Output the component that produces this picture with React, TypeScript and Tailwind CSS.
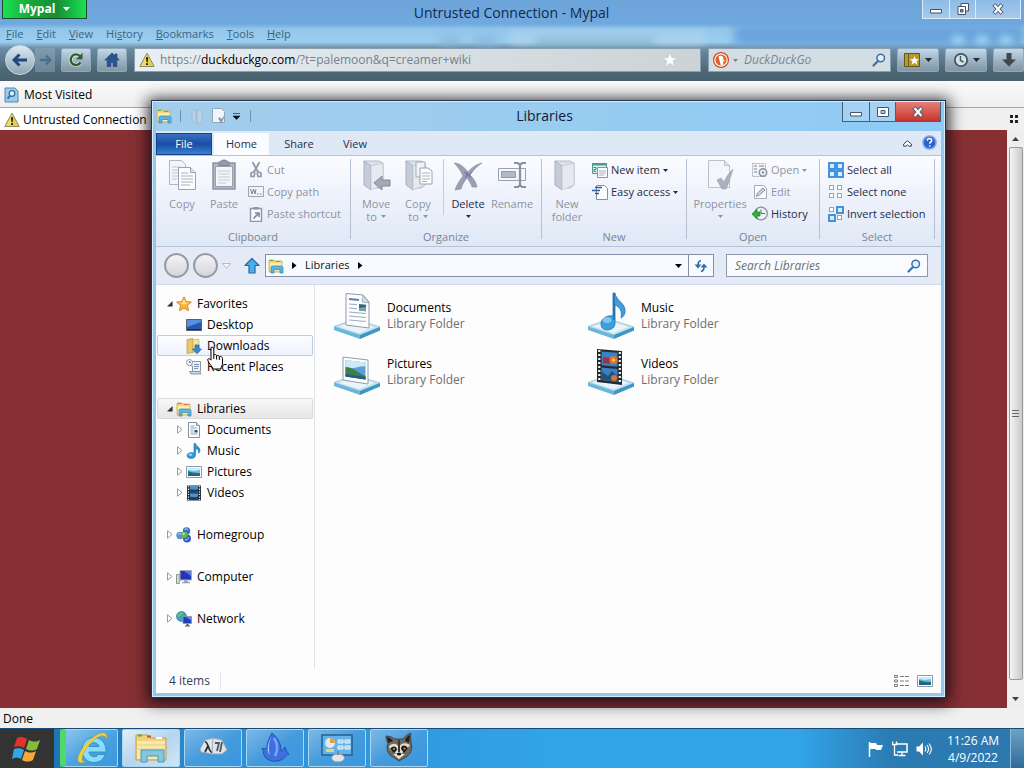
import React from 'react';

const GlassButton = ({ label, className = '', children }: { label: string; className?: string; children: React.ReactNode }) => (
  <button
    aria-label={label}
    className={`flex h-6 shrink-0 items-center justify-center gap-1 rounded-xs border border-[#8fa9bc] bg-gradient-to-b from-[#c3d9ea] via-[#9fb4c4] to-[#8296a5] ${className}`}
  >
    {children}
  </button>
);

const Caret = ({ className = 'text-[#1e2a3a]' }: { className?: string }) => (
  <svg width="7" height="4" viewBox="0 0 7 4" className={`shrink-0 ${className}`}>
    <path d="M0 0h7L3.500 4z" fill="currentColor" />
  </svg>
);

const SmallCaret = () => (
  <svg width="5" height="3" viewBox="0 0 5 3" className="shrink-0">
    <path d="M0 0h5L2.500 3z" fill="currentColor" />
  </svg>
);

const WarningIcon = () => (
  <svg width="16" height="16" viewBox="0 0 16 16" className="shrink-0">
    <path d="M8 1.200 15.200 14.500H.8z" fill="#e9cf42" stroke="#8f8a63" strokeLinejoin="round" />
    <path d="M8 3 9 5v9H2z" fill="#f5e878" opacity=".6" />
    <path d="M7 5.200h2.200l-.5 5H7.500zM7 11.200h2v1.900H7z" fill="#1c1c14" />
  </svg>
);

const LibrariesIcon = ({ size = 16 }: { size?: number }) => (
  <svg width={size} height={size} viewBox="0 0 16 16" className="shrink-0">
    <path d="M1 2h5l1 1h7v11H1z" fill="#f3d778" stroke="#d0a842" strokeWidth=".8" />
    <path d="M2 2.500h3" stroke="#4fae4c" />
    <path d="M8 3.500h4" stroke="#e87047" />
    <path d="M2 5h11.500v8H2z" fill="#fbeeb0" />
    <path d="M3 15V9.500C3 8.600 3.500 8 4.500 8h8c1 0 2.500.6 2.500 1.500V15h-3v-3.500H6V15z" fill="#5db4df" stroke="#2f86b8" strokeWidth=".7" />
  </svg>
);

const PageGlyph = ({ size = 16 }: { size?: number }) => (
  <svg width={size} height={size} viewBox="0 0 16 16" className="shrink-0">
    <path d="M2.500.5h8l3 3v12h-11z" fill="#fdfdfd" stroke="#8793a5" />
    <path d="M10.500.5v3h3" fill="#d6dfec" stroke="#8793a5" />
    <path d="M4.500 4h4M4.500 6h7M4.500 8h3M4.500 10h3M4.500 12h7" stroke="#8fa3bd" />
    <path d="M8.500 8h3v2.500h-3z" fill="#28496a" />
  </svg>
);

const NoteIcon = () => (
  <svg width="16" height="16" viewBox="0 0 16 16" className="shrink-0">
    <path d="M8 .5h1.500c.3 2.500 4.500 3.500 4.500 6.500 0 1.300-.6 2.500-1.400 3.300.3-2.300-.7-4-3.100-4.700V12c0 2-1.800 3.500-4.300 3.500S1 14.300 1 12.700C1 10.900 3 9.600 5.300 9.600c1 0 1.900.2 2.700.6z" fill="#2d95d8" stroke="#1b6fae" strokeWidth=".6" />
    <ellipse cx="4.500" cy="11.800" rx="2" ry="1.200" fill="#8fd0f5" />
  </svg>
);

const PictureIcon = () => (
  <svg width="16" height="16" viewBox="0 0 16 16" className="shrink-0">
    <path d="M.5 2.500h15v11H.5z" fill="#fff" stroke="#8b9aab" />
    <path d="M2 4h12v8H2z" fill="#6fc0e8" />
    <path d="M2 4h12v2l-6 1-6-1z" fill="#c8ecf9" />
    <path d="M2 7c3 1 7 2 12 2v3H2z" fill="#28746b" />
    <path d="M2 10.500c4-1 8 0 12 1v.5H2z" fill="#1b5ea0" />
  </svg>
);

const FilmIcon = () => (
  <svg width="16" height="16" viewBox="0 0 16 16" className="shrink-0">
    <path d="M1 .5h14v15H1z" fill="#1e2b31" />
    <path d="M4 1h8v6.500H4zM4 8.500h8V15H4z" fill="#4f93c9" />
    <path d="M4 5c2-2 5 1 8-1v3.500H4zM4 12c3-1 5 2 8-1v4H4z" fill="#1f4168" />
    <path d="M2.500 1v14M13.500 1v14" stroke="#e1ebe9" strokeWidth="1.300" strokeDasharray="1.300 1.300" />
  </svg>
);

const StarIcon = () => (
  <svg width="16" height="16" viewBox="0 0 16 16" className="shrink-0">
    <path d="m8 .8 2.200 4.700 5.200.6-3.900 3.500 1.100 5.200L8 12.200l-4.600 2.600 1.100-5.200L.6 6.100l5.200-.6z" fill="#f6b53c" stroke="#d6822b" strokeWidth=".9" />
    <path d="m8 3 1.400 3.400 3 .4L8 8.500 3.600 6.800l3-.4z" fill="#fde29a" />
  </svg>
);

const DesktopIcon = () => (
  <svg width="16" height="16" viewBox="0 0 16 16" className="shrink-0">
    <path d="M.5 2.500h15v11H.5z" fill="#2658b4" stroke="#55606e" />
    <path d="M1 3h14v2L1 10z" fill="#5b90df" />
    <path d="M1 12.500h14" stroke="#1a2c4f" />
  </svg>
);

const DownloadsIcon = () => (
  <svg width="16" height="16" viewBox="0 0 16 16" className="shrink-0">
    <path d="M1 1.500 7 .5v14l-6 1z" fill="#e9c869" stroke="#b99744" strokeWidth=".7" />
    <path d="M7 1.500h6V14H7z" fill="#f7e3a0" stroke="#cfb061" strokeWidth=".7" />
    <path d="M9 7h4v4h2.500L11 15.700 6.500 11H9z" fill="#348bd0" stroke="#1e65a4" strokeWidth=".7" />
  </svg>
);

const RecentIcon = () => (
  <svg width="16" height="16" viewBox="0 0 16 16" className="shrink-0">
    <path d="M5 2.500h9.500v10h-8V7H5z" fill="#edf0f5" stroke="#8d98a7" />
    <path d="M3.500 12.500h10l1.500 2.500h-10z" fill="#d1d8e3" stroke="#8a93a3" />
    <path d="M8 5.500h5M8 7.500h5M8 9.500h4" stroke="#7c93b4" />
    <circle cx="3.500" cy="3.500" r="3" fill="#fff" stroke="#8d98a7" />
    <path d="M3.500 2v1.500H5" stroke="#596a80" fill="none" />
  </svg>
);

const HomegroupIcon = () => (
  <svg width="16" height="16" viewBox="0 0 16 16" className="shrink-0">
    <circle cx="10.500" cy="4" r="3.700" fill="#3b6fc0" />
    <circle cx="4" cy="8.500" r="3.700" fill="#5a93cf" />
    <circle cx="11" cy="11.500" r="4" fill="#325fb4" />
    <circle cx="8.500" cy="8" r="3.200" fill="#58b848" />
    <path d="M8.500 2.500c1-1 3-.8 3.500.5M2 7.500c.8-1 2.500-1.200 3.200-.3M9 13c2-.2 3-1 4-2.500" stroke="#cfe5fa" fill="none" />
    <circle cx="7.700" cy="7" r="1.200" fill="#b9ec9c" />
  </svg>
);

const ComputerIcon = () => (
  <svg width="16" height="16" viewBox="0 0 16 16" className="shrink-0">
    <path d="M.5 5.500h2.800v9H.5z" fill="#dbe2d6" stroke="#8a9787" />
    <path d="M4 1.500h11.500v9.500H4z" fill="#2336b7" stroke="#a5abb5" />
    <path d="M8 2h7v5z" fill="#5c77e2" />
    <path d="M8 11.500h4v1.500h2v1.200H6V13h2z" fill="#98a4b3" />
  </svg>
);

const NetworkIcon = () => (
  <svg width="16" height="16" viewBox="0 0 16 16" className="shrink-0">
    <circle cx="5.500" cy="5.500" r="5" fill="#3f9fd2" stroke="#1c6b97" strokeWidth=".6" />
    <path d="M2 3c2-2 4-2 5-1.500S5 5 4 5 2.500 8 1.500 7zM6 6l3-1v4z" fill="#62c46a" />
    <path d="M7 5.500h8.500v7H7z" fill="#1e40b5" stroke="#8d98aa" strokeWidth=".8" />
    <path d="M10 6h5v3.500z" fill="#6185e6" />
    <path d="M10.500 13h2v1.500H14v1H9v-1h1.500z" fill="#4c5a6d" />
  </svg>
);

const Magnifier = ({ color = '#3b6fa5' }: { color?: string }) => (
  <svg width="14" height="14" viewBox="0 0 14 14" className="shrink-0">
    <circle cx="8.700" cy="5" r="3.800" fill="#e3f0fb" stroke={color} strokeWidth="1.500" />
    <path d="M6 8 1.500 12.500" stroke={color} strokeWidth="2.200" strokeLinecap="round" />
  </svg>
);

const WindowGlyph = ({ kind }: { kind: 'min' | 'restore' | 'max' | 'close' }) => (
  <svg width="14" height="12" viewBox="0 0 14 12">
    {kind === 'min' && <path d="M1.500 6.500h11v3.500h-11z" fill="#fff" stroke="#44536b" />}
    {kind === 'max' && <path d="M1.500 1.500h11v9h-11zM5 4.500h4v3H5z" fill="#fff" fillRule="evenodd" stroke="#44536b" />}
    {kind === 'restore' && (
      <>
        <path d="M5 .5h7.500v7.500H5z" fill="#fff" stroke="#44536b" />
        <path d="M2 3.500h7.500v8H2zM4.500 6.500h2.500v2.500H4.500z" fill="#fff" fillRule="evenodd" stroke="#44536b" />
      </>
    )}
    {kind === 'close' && (
      <>
        <path d="m3 1.500 8 9M11 1.500l-8 9" stroke="#44536b" strokeWidth="4" />
        <path d="m3.500 2 7 8M10.500 2l-7 8" stroke="#fff" strokeWidth="2.200" />
      </>
    )}
  </svg>
);

/* Browser */

const menus = ['File', 'Edit', 'View', 'History', 'Bookmarks', 'Tools', 'Help'];

const MenuItem = ({ name }: { name: string }) => {
  const key = name === 'History' ? 2 : 0;
  return (
    <button>
      {name.slice(0, key)}
      <span className="underline">{name[key]}</span>
      {name.slice(key + 1)}
    </button>
  );
};

const BrowserChrome = () => (
  <header className="relative h-[81px] shrink-0 overflow-hidden bg-[linear-gradient(#6da4da_0,#70a9df_24px,#94c6ea_29px,#9bcdf0_42px,#6d8da5_48px,#4d6877_70px,#4a6270_80px)]">
    {/* shapes showing through the glass */}
    <div className="absolute top-[30px] right-[318px] left-[510px] h-4 bg-[#b4d8ee]/50 blur-[3px]" />
    <div className="absolute top-[38px] left-[536px] h-2 w-[118px] bg-[#6c9bb8]/50 blur-xs" />
    <div className="absolute top-9 left-[440px] h-3 w-5 bg-[#7fb0d6]/60 blur-xs" />
    <div className="absolute top-9 left-[474px] h-3 w-6 bg-[#7fb0d6]/60 blur-xs" />
    <div className="absolute top-6 right-0 h-[22px] w-[290px] bg-[#6ca5dc] blur-xs" />
    <div className="absolute top-9 right-[60px] h-2 w-3 bg-[#9dd2f0] blur-[3px]" />
    <div className="absolute top-9 right-9 h-2 w-3 bg-[#9dd2f0] blur-[3px]" />
    <div className="absolute top-9 right-3 h-2 w-3 bg-[#9dd2f0] blur-[3px]" />

    <div className="relative flex h-[26px] items-start">
      <div className="flex-1 pl-[2px]">
        <button className="flex h-[19px] w-[85px] items-center justify-center gap-2 border border-t-0 border-[#1c4d28] bg-[linear-gradient(90deg,#1ce052,#17a53a_35%,#148f36_65%,#1ce052)] text-[12px] font-bold text-white">
          Mypal <Caret className="text-white" />
        </button>
      </div>
      <h1 className="text-[14px] leading-[26px] text-[#0c2a52]">Untrusted Connection - Mypal</h1>
      <div className="flex flex-1 justify-end pr-[3px]">
        <div className="flex h-[19px] border border-t-0 border-[#dcebf8] bg-gradient-to-b from-[#8ebbe6] to-[#a5caea]">
          <button aria-label="Minimize" className="flex w-[27px] items-center justify-center border-r border-[#dcebf8]"><WindowGlyph kind="min" /></button>
          <button aria-label="Restore" className="flex w-[26px] items-center justify-center border-r border-[#dcebf8]"><WindowGlyph kind="restore" /></button>
          <button aria-label="Close" className="flex w-11 items-center justify-center"><WindowGlyph kind="close" /></button>
        </div>
      </div>
    </div>

    <nav className="relative flex h-4 items-center gap-[13px] pl-[6px] text-[11px] text-[#3a6483]">
      {menus.map((name) => <MenuItem key={name} name={name} />)}
    </nav>

    <div className="relative flex h-9 items-center gap-[6px] pl-[5px]">
      <div className="flex items-center">
        <button aria-label="Back" className="z-10 flex h-[30px] w-[30px] items-center justify-center rounded-full border border-[#c8dbe8] bg-gradient-to-b from-[#dbe9f4] via-[#b5c6d4] to-[#93a5b3]">
          <svg width="16" height="14" viewBox="0 0 16 14">
            <path d="M7.500 1.500 2 7l5.500 5.500M2.500 7H15" fill="none" stroke="#1d4a7f" strokeWidth="3" />
          </svg>
        </button>
        <button aria-label="Forward" className="flex h-6 w-5 items-center justify-center bg-[#8fa9bb]/50">
          <svg width="13" height="12" viewBox="0 0 16 14">
            <path d="M8.500 1.500 14 7l-5.500 5.500M13.500 7H1" fill="none" stroke="#4d7089" strokeWidth="3" />
          </svg>
        </button>
      </div>
      <GlassButton label="Reload" className="w-[30px]">
        <svg width="16" height="16" viewBox="0 0 16 16">
          <path d="M12.500 10.500A5.300 5.300 0 1 1 11.800 4" fill="none" stroke="#dbe9d8" strokeWidth="4" />
          <path d="M12.500 10.500A5.300 5.300 0 1 1 11.800 4" fill="none" stroke="#2f5d35" strokeWidth="2.400" />
          <path d="M14.500.8v6.500H8z" fill="#2f5d35" />
        </svg>
      </GlassButton>
      <GlassButton label="Home" className="w-[30px]">
        <svg width="16" height="16" viewBox="0 0 16 16">
          <path d="M8 1 .8 8h2.400v6.500h3.600v-4h2.400v4h3.600V8h2.400L13 5.600V2h-2v1.800z" fill="#2b5592" stroke="#1d3f72" strokeWidth=".6" />
        </svg>
      </GlassButton>
      <label className="ml-px flex h-6 min-w-0 flex-1 items-center border border-[#8aa0b0] bg-gradient-to-r from-[#e8eff4] to-[#ccd3d7] px-1 text-[12px] text-[#74828d]">
        <WarningIcon />
        <span className="ml-[5px]">https://</span>
        <span className="text-black">duckduckgo.com</span>
        <input aria-label="Address" defaultValue="/?t=palemoon&q=creamer+wiki" className="min-w-0 flex-1 outline-none" />
        <svg width="16" height="16" viewBox="0 0 16 16" className="mr-[18px] shrink-0">
          <path d="m8 .8 2 5h5.200L11 9l1.600 5.600L8 11.300l-4.600 3.300L5 9 .8 5.800H6z" fill="#fff" stroke="#bcc8d1" strokeWidth=".6" />
        </svg>
      </label>
      <label className="ml-px flex h-6 w-[183px] items-center gap-1 border border-[#8aa0b0] bg-[#d3dde4] px-1">
        <svg width="16" height="16" viewBox="0 0 16 16" className="shrink-0">
          <circle cx="8" cy="8" r="8" fill="#d2451f" />
          <circle cx="8" cy="8" r="6.200" fill="#e0602f" stroke="#fff" strokeWidth="1.200" />
          <path d="M5.500 4.500C8 2.500 11 4.500 10.500 7.500l2 1.500-2.500.5.500 4H7.800z" fill="#fff" />
          <path d="M9.500 8h3l-2 1.700z" fill="#f6c431" />
        </svg>
        <span className="text-[#77838c]"><SmallCaret /></span>
        <input aria-label="Search the web" placeholder="DuckDuckGo" className="min-w-0 flex-1 pl-[2px] text-[12px] italic outline-none placeholder:text-[#7c8790]" />
        <Magnifier />
      </label>
      <GlassButton label="Bookmarks" className="w-[42px]">
        <svg width="17" height="16" viewBox="0 0 17 16">
          <path d="M.5 1.500h15v13H.5z" fill="#b59b2c" stroke="#64571b" />
          <path d="M4.500 2v12" stroke="#6a5c1e" />
          <path d="m10.500 4 1.300 3.200h3.400l-2.700 2.100 1 3.400-3-2-3 2 1-3.400-2.700-2.100h3.400z" fill="#fff" />
        </svg>
        <Caret />
      </GlassButton>
      <GlassButton label="History" className="w-[42px]">
        <svg width="16" height="16" viewBox="0 0 16 16">
          <circle cx="8" cy="8" r="6.200" fill="#d5e2e3" stroke="#405a60" strokeWidth="1.800" />
          <path d="M7.500 4v4.500L10.500 10" fill="none" stroke="#405a60" strokeWidth="1.400" />
        </svg>
        <Caret />
      </GlassButton>
      <GlassButton label="Downloads" className="w-[31px]">
        <svg width="14" height="14" viewBox="0 0 14 14">
          <path d="M4.500 0h5v6.500H14L7 13.500 0 6.500h4.500z" fill="#41474c" />
        </svg>
      </GlassButton>
    </div>
  </header>
);

const ScrollBar = () => (
  <div className="flex w-[17px] flex-col items-center bg-[#eeeeee]">
    <button aria-label="Scroll up" className="flex h-[17px] items-center justify-center"><Caret className="rotate-180 text-[#444]" /></button>
    <div className="flex w-[14px] flex-1 items-center justify-center rounded-xs border border-[#9a9a9a] bg-gradient-to-r from-[#f5f5f5] to-[#c9c9cb]">
      <svg width="7" height="7" viewBox="0 0 7 7"><path d="M0 .5h7M0 3.500h7M0 6.500h7" stroke="#666" /></svg>
    </div>
    <button aria-label="Scroll down" className="flex h-7 items-end justify-center pb-[7px]"><Caret className="text-[#444]" /></button>
  </div>
);

/* Explorer window */

type ToolProps = { label: string; icon: React.ReactNode; caret?: boolean; on?: boolean; className?: string };

const BigTool = ({ label, icon, caret = false, on = false, className = '' }: ToolProps) => {
  const [first, second] = label.split(' ');
  return (
    <button className={`flex flex-col items-center text-[11px] leading-[13px] ${on ? 'text-[#1e2c4a]' : 'text-[#8d94a2]'} ${className}`}>
      <span className="mb-[6px] flex h-8 items-center">{icon}</span>
      <span>{first}</span>
      <span className="flex min-h-3 items-center gap-1">
        {second}
        {caret && <SmallCaret />}
      </span>
    </button>
  );
};

const SmallTool = ({ label, icon, caret = false, on = false }: ToolProps) => (
  <button className={`flex h-[22px] items-center gap-[3px] text-[11px] whitespace-nowrap ${on ? 'text-[#1e2c4a]' : 'text-[#8d94a2]'}`}>
    {icon}
    <span>{label}</span>
    {caret && <SmallCaret />}
  </button>
);

const RibbonGroup = ({ name, className, children }: { name: string; className: string; children: React.ReactNode }) => (
  <section className={`flex h-20 flex-col border-r border-[#b6c1d2] ${className}`}>
    <div className="flex h-[70px] shrink-0 items-start">{children}</div>
    <div className="shrink-0 text-center text-[11px] leading-4 text-[#7c8492]">{name}</div>
  </section>
);

const FolderGlyph = ({ overlay }: { overlay?: 'arrow' | 'pages' }) => (
  <svg width="30" height="32" viewBox="0 0 30 32">
    <path d="M3 2h15l4 2v22l-4 3H8z" fill="#dbe0ea" stroke="#b4bac8" />
    <path d="M3 2 10 7v24l-7-5z" fill="#c5cbd9" stroke="#a9b0c0" />
    <path d="M10 7 22 4v22l-12 5z" fill="#e6e9f0" stroke="#bfc5d1" strokeWidth=".7" />
    {overlay === 'arrow' && <path d="m13 24 8-7v4h8v6h-8v4z" fill="#a3abb9" stroke="#7f8898" />}
    {overlay === 'pages' && (
      <>
        <path d="M13 3h9v15h-9z" fill="#f1f3f7" stroke="#a3abb9" />
        <path d="M17 9h8l4 3v13H17z" fill="#fff" stroke="#98a1b1" />
        <path d="M19 14h8M19 17h8M19 20h8M19 22.500h5" stroke="#a5aebc" />
      </>
    )}
  </svg>
);

const CopyGlyph = () => (
  <svg width="30" height="32" viewBox="0 0 30 32">
    <path d="M2.500 1.500h12l4 4v20h-16z" fill="#f3f5f9" stroke="#b0b7c4" />
    <path d="M5 8h8M5 11h8M5 14h6M5 17h6M5 20h5" stroke="#bec5d1" />
    <path d="M11.500 8.500h12l5 5v17h-17z" fill="#fbfcfd" stroke="#99a2b1" />
    <path d="M23.500 8.500v5h5" fill="#dfe4ec" stroke="#99a2b1" />
    <path d="M14 14h7M14 17h12M14 20h12M14 23h12M14 26h9" stroke="#a9b1be" />
  </svg>
);

const PasteGlyph = () => (
  <svg width="26" height="32" viewBox="0 0 26 32">
    <path d="M2 4h22v26H2z" fill="#b0b7c6" stroke="#8b94a5" strokeWidth="1.500" />
    <path d="M4.500 7.500h17v20h-17z" fill="#f3f5f9" stroke="#98a1b2" />
    <path d="M7 12h12M7 15h12M7 18h12M7 21h12M7 24h8" stroke="#c4cad5" />
    <path d="M8 3c2 0 2-2 5-2s3 2 5 2v3.500H8z" fill="#929bab" stroke="#7a8496" />
  </svg>
);

const SquaresGlyph = ({ kind }: { kind: 'all' | 'none' | 'invert' }) => {
  const cells = [[0, 0], [8, 0], [0, 8], [8, 8]];
  return (
    <svg width="16" height="16" viewBox="0 0 16 16" className="shrink-0">
      {cells.map(([x, y]) => {
        const picked = kind === 'all' || (kind === 'invert' && x + y === 8);
        return picked ? (
          <rect key={`${x}${y}`} x={x + 1} y={y + 1} width="6" height="6" fill="#d6ebfc" stroke="#318ad8" strokeWidth="1.800" />
        ) : (
          <rect key={`${x}${y}`} x={x + 1.5} y={y + 1.5} width="4" height="4" fill="#fff" stroke="#98a2b3" />
        );
      })}
    </svg>
  );
};

const Ribbon = () => (
  <div className="flex h-[92px] shrink-0 items-start border-y border-[#b4c4d8] bg-gradient-to-b from-[#fbfcff] via-[#edf1fb] to-[#dfe8f6] pt-[3px]">
    <RibbonGroup name="Clipboard" className="w-[195px]">
      <BigTool label="Copy" icon={<CopyGlyph />} className="ml-1 w-11" />
      <BigTool label="Paste" icon={<PasteGlyph />} className="w-10" />
      <div className="ml-1">
        <SmallTool label="Cut" icon={
          <svg width="16" height="16" viewBox="0 0 16 16">
            <path d="M4.500 0 10 10M11.500 0 6 10" stroke="#8e97a8" strokeWidth="1.800" />
            <path d="M6.500 9.500 3 11v3.500h3l1-4M9.500 9.500 13 11v3.500h-3l-1-4" fill="none" stroke="#8e97a8" strokeWidth="1.700" />
          </svg>} />
        <SmallTool label="Copy path" icon={
          <svg width="16" height="16" viewBox="0 0 16 16">
            <path d="M.5 2.500h15v10H.5z" fill="#f1f4f8" stroke="#9ba4b3" />
            <path d="m2.500 5 1.500 5 1.500-5L7 10l1-5" fill="none" stroke="#7c8596" />
            <path d="M9 10h1.500M12 10h1.500" stroke="#7c8596" />
          </svg>} />
        <SmallTool label="Paste shortcut" icon={
          <svg width="16" height="16" viewBox="0 0 16 16">
            <path d="M2.500 2.500h11v13h-11z" fill="#f7f9fb" stroke="#8e97a8" strokeWidth="1.400" />
            <path d="M5.500 1h5v2.500h-5z" fill="#8e97a8" />
            <path d="M5.500 12.500 10 8M7 7h4v4" fill="none" stroke="#7c8596" strokeWidth="1.600" />
          </svg>} />
      </div>
    </RibbonGroup>
    <RibbonGroup name="Organize" className="w-[191px]">
      <BigTool label="Move to" icon={<FolderGlyph overlay="arrow" />} caret className="ml-1 w-[42px]" />
      <BigTool label="Copy to" icon={<FolderGlyph overlay="pages" />} caret className="w-[42px]" />
      <div className="mr-1 ml-1 h-14 border-r border-[#c3ccda]" />
      <BigTool label="Delete" caret on className="w-10" icon={
        <svg width="32" height="32" viewBox="0 0 32 32">
          <path d="M2 4c6 0 11 5 14 9 4-5 9-8 14-9-6 4-9 8-12 12 4 4 6 7 7 12h-5c-1-4-3-6-5-9-3 4-5 7-6 11l-6 1c2-6 5-10 8-14C9 12 6 8 2 4z" fill="#9aa0ae" stroke="#858c9b" strokeWidth=".6" />
          <path d="m12 12 5 3 4-3-3 4 2 4-4-3-4 3 2-4z" fill="#7c78b8" />
        </svg>} />
      <BigTool label="Rename" className="w-[48px]" icon={
        <svg width="32" height="32" viewBox="0 0 32 32">
          <path d="M2.500 9.500h27v12h-27z" fill="#f5f7fa" stroke="#99a2b2" />
          <path d="M5.500 12.500h14v6h-14z" fill="#b1b8c6" stroke="#929bac" />
          <path d="M18 4h4l2 2 2-2h4M18 28h4l2-2 2 2h4M24 6v20" fill="none" stroke="#8992a3" strokeWidth="2.200" />
        </svg>} />
    </RibbonGroup>
    <RibbonGroup name="New" className="w-[145px]">
      <BigTool label="New folder" icon={<FolderGlyph />} className="ml-1 w-[42px]" />
      <div className="ml-1">
        <SmallTool label="New item" caret on icon={
          <svg width="16" height="16" viewBox="0 0 16 16">
            <path d="M.5 1.500h14v10H.5z" fill="#e2f2ee" stroke="#4a9a8d" />
            <path d="M0 2.500h15" stroke="#4a9a8d" strokeWidth="2" />
            <path d="M5.500 5.500h10v10h-10z" fill="#fafbfd" stroke="#8a93a6" />
            <path d="M7 9h7M7 11h7M7 13h5" stroke="#a9b1c2" />
            <path d="M1.500 5.500h2.500v2H2v2h2" stroke="#3f84a6" fill="none" />
          </svg>} />
        <SmallTool label="Easy access" caret on icon={
          <svg width="16" height="16" viewBox="0 0 16 16">
            <path d="M4.500 1.500h8l3 3v11h-11z" fill="#fdfdfe" stroke="#8590a5" />
            <path d="M3 3.500h7M0 6.500h8M3 9.500h4" stroke="#2c5c98" strokeWidth="1.600" />
          </svg>} />
      </div>
    </RibbonGroup>
    <RibbonGroup name="Open" className="w-[133px]">
      <BigTool label="Properties" caret className="ml-1 w-[58px]" icon={
        <svg width="30" height="32" viewBox="0 0 30 32">
          <path d="M3.500 1.500h16l5 5v22h-21z" fill="#f5f6fa" stroke="#bac1cd" />
          <path d="M19.500 1.500v5h5" fill="#dde2ea" stroke="#bac1cd" />
          <path d="m12 21 4-2 3 4c2-5 5-9 9-13-2 7-4 13-7 20h-4z" fill="#a9b0bf" stroke="#969eae" strokeWidth=".6" />
        </svg>} />
      <div className="ml-[3px]">
        <SmallTool label="Open" caret icon={
          <svg width="16" height="16" viewBox="0 0 16 16">
            <path d="M.5 1.500h13v13H.5z" fill="#f2f4f8" stroke="#a3abb9" strokeDasharray="2 1" />
            <path d="M2 4h3M2 7h3M2 10h3M7 4h5" stroke="#a3abb9" strokeWidth="1.500" />
            <circle cx="11" cy="10.500" r="3.700" fill="#edf0f5" stroke="#8992a3" strokeWidth="1.500" />
            <circle cx="11" cy="10.500" r="1.200" fill="#8992a3" />
          </svg>} />
        <SmallTool label="Edit" icon={
          <svg width="16" height="16" viewBox="0 0 16 16">
            <path d="M2.500 1.500h9l3 3v10h-12z" fill="#fafbfd" stroke="#a3abb9" />
            <path d="M4.500 12.500 5.500 9 11 4l2 2-5.500 5z" fill="#ccd2dc" stroke="#8992a3" />
          </svg>} />
        <SmallTool label="History" on icon={
          <svg width="16" height="16" viewBox="0 0 16 16">
            <circle cx="9" cy="7.500" r="6.300" fill="#f0f3f7" stroke="#8791a0" strokeWidth="1.300" />
            <path d="M9 3.500v4h4" fill="none" stroke="#59657a" />
            <path d="M0 8 5 3.500V6h3v4H5v3z" fill="#2bb52c" stroke="#14801c" strokeWidth=".7" />
          </svg>} />
      </div>
    </RibbonGroup>
    <RibbonGroup name="Select" className="w-[115px]">
      <div className="ml-2">
        <SmallTool label="Select all" on icon={<SquaresGlyph kind="all" />} />
        <SmallTool label="Select none" on icon={<SquaresGlyph kind="none" />} />
        <SmallTool label="Invert selection" on icon={<SquaresGlyph kind="invert" />} />
      </div>
    </RibbonGroup>
  </div>
);

const AddressRow = () => (
  <div className="flex h-[38px] shrink-0 items-center border-b border-[#cfdbe8] bg-[#e4ebf6] pr-[13px] pl-2">
    <button aria-label="Back" className="h-[25px] w-[25px] rounded-full border-2 border-[#969ba3] bg-gradient-to-b from-[#f2f3f5] to-[#d3d6db]" />
    <button aria-label="Forward" className="ml-1 h-[25px] w-[25px] rounded-full border-2 border-[#969ba3] bg-gradient-to-b from-[#f2f3f5] to-[#d3d6db]" />
    <svg width="9" height="6" viewBox="0 0 9 6" className="ml-1"><path d="M.5.5h8l-4 5z" fill="#f4f6fa" stroke="#b4bccb" /></svg>
    <button aria-label="Up" className="ml-3">
      <svg width="18" height="18" viewBox="0 0 18 18">
        <path d="M9 1.500 16 8.500h-4V16H6V8.500H2z" fill="#49b0ee" stroke="#2566a0" strokeWidth="1.200" strokeLinejoin="round" />
      </svg>
    </button>
    <div className="ml-1 flex h-[23px] min-w-0 flex-1 items-center border border-[#8390a5] bg-[#f7faff] pl-[2px] text-[11px] text-[#111]">
      <LibrariesIcon />
      <svg width="5" height="7" viewBox="0 0 5 7" className="ml-2"><path d="M0 0v7l4.500-3.500z" /></svg>
      <button className="ml-2">Libraries</button>
      <svg width="5" height="7" viewBox="0 0 5 7" className="ml-2"><path d="M0 0v7l4.500-3.500z" /></svg>
      <button aria-label="Previous locations" className="ml-auto flex h-full w-5 items-center justify-center"><Caret className="text-black" /></button>
    </div>
    <button aria-label="Refresh" className="-ml-px flex h-[23px] w-[26px] items-center justify-center border border-[#8390a5] bg-[#f7faff]">
      <svg width="14" height="14" viewBox="0 0 14 14">
        <path d="M7 1.500c-2.500.5-3 2-3 5M7 12.500c2.500-.5 3-2 3-5" fill="none" stroke="#2e6fae" strokeWidth="1.700" />
        <path d="M.5 5.500h7L4 9.500zM6.500 8.500h7L10 4.500z" fill="#2e6fae" />
      </svg>
    </button>
    <label className="ml-3 flex h-[23px] w-[202px] items-center border border-[#8c99ae] bg-[#f9fbff] pr-[6px] pl-2">
      <input aria-label="Search Libraries" placeholder="Search Libraries" className="min-w-0 flex-1 text-[12px] italic outline-none placeholder:text-[#6a7078]" />
      <Magnifier color="#3c73b0" />
    </label>
  </div>
);

type Row = { label: string; icon: React.ReactNode; level: number; open?: boolean; look?: string; gap?: boolean };

const rows: Row[] = [
  { label: 'Favorites', icon: <StarIcon />, level: 0, open: true },
  { label: 'Desktop', icon: <DesktopIcon />, level: 1 },
  { label: 'Downloads', icon: <DownloadsIcon />, level: 1, look: 'border-[#bccbe8] bg-gradient-to-b from-[#fdfdff] to-[#edf2fb]' },
  { label: 'Recent Places', icon: <RecentIcon />, level: 1 },
  { label: 'Libraries', icon: <LibrariesIcon />, level: 0, open: true, look: 'border-[#dadada] bg-gradient-to-b from-[#f8f8f8] to-[#e6e6e6]', gap: true },
  { label: 'Documents', icon: <PageGlyph />, level: 1, open: false },
  { label: 'Music', icon: <NoteIcon />, level: 1, open: false },
  { label: 'Pictures', icon: <PictureIcon />, level: 1, open: false },
  { label: 'Videos', icon: <FilmIcon />, level: 1, open: false },
  { label: 'Homegroup', icon: <HomegroupIcon />, level: 0, open: false, gap: true },
  { label: 'Computer', icon: <ComputerIcon />, level: 0, open: false, gap: true },
  { label: 'Network', icon: <NetworkIcon />, level: 0, open: false, gap: true },
];

const NavTree = () => (
  <nav className="w-[159px] shrink-0 border-r border-[#dce3ea] px-px pt-2 text-[12px] text-black">
    {rows.map((row) => (
      <button
        key={row.label}
        className={`flex h-[21px] w-full items-center rounded-xs border ${row.look ?? 'border-transparent'} ${row.level ? 'pl-[18px]' : 'pl-2'} ${row.gap ? 'mt-[21px]' : ''}`}
      >
        <span className="w-[10px] pl-px">
          {row.open === true && <svg width="6" height="6" viewBox="0 0 7 7"><path d="M6.500 0v6.500H0z" fill="#333" /></svg>}
          {row.open === false && <svg width="6" height="9" viewBox="0 0 6 9"><path d="M.5.8v7.400L5 4.500z" fill="#fff" stroke="#9b9b9b" /></svg>}
        </span>
        {row.icon}
        <span className="ml-[5px]">{row.label}</span>
      </button>
    ))}
  </nav>
);

const Tray = () => (
  <>
    <path d="M1 34.500 22 27l25 8-20 8z" fill="#c9e4f1" stroke="#8dbdd6" strokeWidth=".7" />
    <path d="M6 34.500 23 29l18 6-15 6z" fill="#e9f5fa" />
    <path d="M1 34.500v3.500l26 9v-4z" fill="#69b6d9" />
    <path d="m27 43 20-8v3.500l-20 8.500z" fill="#3d96c6" />
  </>
);

const libraries = [
  {
    name: 'Documents',
    art: (
      <>
        <path d="M13 1.500 30 3l6 7v26l-23-3z" fill="#fdfdfe" stroke="#8f9aaa" />
        <path d="m30 3-1 7 7 1z" fill="#d5dde8" stroke="#8f9aaa" strokeWidth=".7" />
        <path d="M16 7l10 1" stroke="#5a7fb4" strokeWidth="2" />
        <path d="m16 12 8 .7m-8 3.300 8 .7m-8 3.300 17 1.500m-17 2.500 17 1.500m-17 2.500 17 1.500" stroke="#9aaac2" />
        <path d="m26 12 7 .8v6.500l-7-.8z" fill="#3a6186" />
        <path d="m26 16 7-1v4.300l-7-.8z" fill="#71a6a0" />
      </>
    ),
  },
  {
    name: 'Music',
    art: (
      <>
        <path d="M28 1c1 8 11 10 10 19-.3 3-2 5-4 6 1.500-7-1-11-6-13v18c0 4-3 7-8 7-4 0-6-3-6-6 0-5 5-9 12-8V1z" fill="#3f9fdd" stroke="#1e70b0" strokeWidth=".8" />
        <ellipse cx="20" cy="28" rx="4.500" ry="3" fill="#8fd1f5" opacity=".8" />
        <path d="M27 2v26" stroke="#15609f" />
      </>
    ),
  },
  {
    name: 'Pictures',
    art: (
      <>
        <path d="m10 9 25 3v24l-25-4z" fill="#fff" stroke="#909dad" />
        <path d="m12.500 12 20 2.500v17l-20-3z" fill="#5b9fda" />
        <path d="m12.500 12 20 2.500v4c-6-1-13 4-20 1z" fill="#cfeaf7" />
        <path d="M12.500 19c8 0 12 6 20 9v3.500l-20-3z" fill="#417d49" />
        <path d="m12.500 26 20 3v2.500l-20-3z" fill="#1d5f93" />
      </>
    ),
  },
  {
    name: 'Videos',
    art: (
      <>
        <path d="m10 1 25 2v34l-25-3z" fill="#272a2c" />
        <path d="m14.500 3.500 16 1.200v14l-16-1.500zM14.500 19.500l16 1.500v13l-16-2z" fill="#3b7fc4" />
        <path d="m16 9 7 1v6l-7-1z" fill="#a52f43" />
        <circle cx="26.500" cy="12" r="4" fill="#e0762d" />
        <circle cx="26.500" cy="12" r="1.600" fill="#f5cf45" />
        <path d="m15 24 6 4 4-5 5 5v5.500l-15-2z" fill="#25507b" />
        <circle cx="27" cy="30" r="3" fill="#d17636" />
        <path d="M12.300 2v32M32.800 4v32" stroke="#f1f4f2" strokeWidth="2.200" strokeDasharray="2 2" />
      </>
    ),
  },
];

const HandCursor = () => (
  <svg width="18" height="24" viewBox="0 0 18 24" className="pointer-events-none absolute top-[245px] left-[55px]">
    <path d="M4 1.500c1.200-.8 2.800 0 2.800 1.500v6c1-.8 2.500-.4 2.800.7 1-.6 2.400-.2 2.700 1 1.300-.5 3.200 0 3.200 1.800V17c0 2.500-1.500 3.500-1.500 6H6c0-2-5-6.500-5.300-9-.2-1.500 1.700-2 3.300.2z" fill="#fff" stroke="#000" strokeLinejoin="round" />
    <path d="M6.800 9v4M9.600 10v3.500M12.300 11v3" stroke="#000" />
  </svg>
);

const ExplorerWindow = () => (
  <div className="absolute top-[100px] right-[78px] bottom-[70px] left-[151px] flex flex-col border border-[#23364b] bg-[#93c9f0] shadow-[0_2px_14px_3px_rgba(10,10,20,0.85)]">
    <div className="flex min-h-0 flex-1 flex-col border border-[#d4ecfb] px-[3px] pb-[3px]">
      <div className="flex h-[29px] shrink-0 items-start bg-gradient-to-r from-[#a3cdeb] to-[#8ecbf5]">
        <div className="flex h-7 flex-1 items-center">
          <LibrariesIcon />
          <div className="ml-2 h-3 border-r border-[#6692b8]" />
          <button aria-label="New folder" className="ml-2">
            <svg width="16" height="16" viewBox="0 0 16 16"><path d="M3 2h4v13L3 13zM8 2h5v13H8z" fill="#b8d3e6" stroke="#9fbdd3" /></svg>
          </button>
          <button aria-label="Properties" className="ml-[6px]">
            <svg width="16" height="16" viewBox="0 0 16 16">
              <path d="M1.500.5h9l3 3v11h-12z" fill="#f0f5fb" stroke="#8fa8be" />
              <path d="m7 10 2-.8 1.300 2L14.500 6l-3.500 8.500H9.500z" fill="#8999ad" />
            </svg>
          </button>
          <button aria-label="Customize" className="ml-[2px] p-1">
            <svg width="7" height="7" viewBox="0 0 7 7"><path d="M0 .5h7M0 3h7L3.500 6.500z" fill="#111" stroke="#111" strokeWidth=".6" /></svg>
          </button>
          <div className="ml-[6px] h-3 border-r border-[#6692b8]" />
        </div>
        <h2 className="pr-2 text-[14px] leading-7 text-[#101a30]">Libraries</h2>
        <div className="flex flex-1 justify-end">
          <div className="flex h-5 border border-t-0 border-[#41617f]">
            <button aria-label="Minimize window" className="flex w-[27px] items-center justify-center border-r border-[#41617f] bg-[#a5d2f3]"><WindowGlyph kind="min" /></button>
            <button aria-label="Maximize window" className="flex w-[26px] items-center justify-center border-r border-[#41617f] bg-[#a5d2f3]"><WindowGlyph kind="max" /></button>
            <button aria-label="Close window" className="flex w-11 items-center justify-center bg-gradient-to-b from-[#e28078] to-[#c9302e]"><WindowGlyph kind="close" /></button>
          </div>
        </div>
      </div>

      <div className="flex h-6 shrink-0 items-end bg-[#dfe8f5] text-[11px] text-[#25304c]">
        <button className="h-[22px] w-14 border border-[#16428c] bg-gradient-to-b from-[#3a72c2] via-[#174ea5] to-[#3b80cd] text-white">File</button>
        <button className="ml-[2px] h-[22px] w-[55px] rounded-t-xs bg-[#fbfcff]">Home</button>
        <button className="h-[22px] w-[60px]">Share</button>
        <button className="h-[22px] w-[52px]">View</button>
        <button aria-label="Collapse ribbon" className="mb-2 ml-auto">
          <svg width="9" height="7" viewBox="0 0 9 7"><path d="M.7 6.200V4L4.500.8 8.300 4v2.200H6L4.500 4.800 3 6.200z" fill="#fff" stroke="#2f3c56" /></svg>
        </button>
        <button aria-label="Help" className="mr-1 mb-[5px] ml-[10px]">
          <svg width="15" height="15" viewBox="0 0 15 15">
            <circle cx="7.500" cy="7.500" r="6.500" fill="#2c62cc" stroke="#7fa6e2" strokeWidth="1.600" />
            <path d="M5.300 5.800c0-3 4.600-2.800 4.400-.2-.1 1.600-2 1.600-2 3.200M7.700 10.200v1.600" fill="none" stroke="#fff" strokeWidth="1.500" />
          </svg>
        </button>
      </div>

      <Ribbon />
      <AddressRow />

      <div className="flex min-h-0 flex-1 bg-[#fdfdfd]">
        <NavTree />
        <main className="grid flex-1 auto-rows-[56px] grid-cols-[repeat(auto-fill,254px)] content-start pt-[3px] pl-[18px]">
          {libraries.map((lib) => (
            <button key={lib.name} className="flex items-center gap-[6px] text-left text-[12px] leading-4">
              <svg width="48" height="48" viewBox="0 0 48 48"><Tray />{lib.art}</svg>
              <span>
                <span className="block text-black">{lib.name}</span>
                <span className="block text-[#6d6d6d]">Library Folder</span>
              </span>
            </button>
          ))}
        </main>
      </div>

      <footer className="flex h-6 shrink-0 items-center bg-[#fdfdfd] pr-2 pl-[13px] text-[12px] text-[#33415e]">
        <span className="border-r border-[#e2e6ec] pr-[10px]">4 items</span>
        <button aria-label="Details view" className="ml-auto">
          <svg width="16" height="14" viewBox="0 0 16 14">
            <path d="M.5 1.500h3v2h-3zM.5 6h3v2h-3zM.5 10.500h3v2h-3z" fill="#fff" stroke="#767b84" />
            <path d="M6 2.500h9M6 7h9M6 11.500h9" stroke="#767b84" strokeDasharray="4 1" />
          </svg>
        </button>
        <button aria-label="Icons view" className="ml-[7px]"><PictureIcon /></button>
      </footer>
    </div>
    <HandCursor />
  </div>
);

/* Taskbar */

const apps = [
  {
    name: 'Internet Explorer',
    look: 'from-[#8cc4ec] via-[#4ca3de] to-[#3996e0] border-l-[6px] border-l-[#50d868]',
    icon: (
      <>
        <path d="M33 19.500C33 12 28 6.500 21 6.500S9 12 9 19s5 12.500 12 12.500c5.500 0 9.500-3 11-8h-6.500c-3 4-9 2.500-9.500-2.500H33zm-17-4c1-5 9-5 10 0z" fill="#8bdcfb" stroke="#2c8dc4" strokeWidth=".9" />
        <path d="M34 8c1-7-5-8-12-3C11 12 2 27 6 31c2 1.500 5 .5 7-1-3 1-4.500 0-4-3 1-7 9-17 16-21 4-2 8-2 9 2z" fill="#f2d33e" stroke="#c79a1d" strokeWidth=".5" />
      </>
    ),
  },
  {
    name: 'File Explorer',
    look: 'from-[#e4eef6] via-[#b5d5ef] to-[#cfe5f5]',
    icon: (
      <>
        <path d="M4 4h12l2 3h16v22H4z" fill="#efd27a" stroke="#c4a149" />
        <path d="M6 4.500h4" stroke="#4caf4a" strokeWidth="2" />
        <path d="M15 5.500h4" stroke="#d9483b" strokeWidth="2" />
        <path d="M24 7h6" stroke="#fff" strokeWidth="2" />
        <path d="M5 10h28v18H5z" fill="#fae9a8" />
        <path d="M5 14h28M5 18h28" stroke="#e4cd85" />
        <path d="M9 31V19h23v12h-6v-6H15v6z" fill="#84c5e2" stroke="#4697be" />
      </>
    ),
  },
  {
    name: 'Lambda',
    look: 'from-[#7cb8e6] via-[#459cdc] to-[#3996e0]',
    icon: (
      <>
        <path d="M6 18 11 9l8-2 9 2 5 10-5 4H18L7 21z" fill="#dfe5ec" stroke="#98a6b6" />
        <path d="m19 7-1 16" stroke="#a2adbb" />
        <path d="M11 11c3-1 4 11 7 10M14 15l-3 6" fill="none" stroke="#2c3036" strokeWidth="1.800" />
        <path d="M21 12h4l-2 8M28 11l-2 10" fill="none" stroke="#51575f" strokeWidth="1.800" />
      </>
    ),
  },
  {
    name: 'Pale Moon',
    look: 'from-[#7cb8e6] via-[#459cdc] to-[#3996e0]',
    icon: (
      <>
        <path d="M16 2c6 5 9 11 9 18 2-1 3-2 4-4 1 4 2 5 4 7-3 0-3 4-8 6-8 3-15 0-17-5-1-2 0-4-2-7 2 1 4 1 5 0 0-5 2-10 5-15z" fill="#3d6fe0" stroke="#2450b4" />
        <path d="M16 4c-3 7-4 12-2 20-3-3-4-9 2-20z" fill="#a4c5fa" />
        <path d="M18 7c4 6 4 12 1 18" fill="none" stroke="#7ba5f4" strokeWidth="2.500" />
      </>
    ),
  },
  {
    name: 'Control Panel',
    look: 'from-[#7cb8e6] via-[#459cdc] to-[#3996e0]',
    icon: (
      <>
        <path d="M4 4h30v20H4z" fill="#64b3e8" stroke="#25608f" strokeWidth="1.500" />
        <circle cx="12" cy="12" r="5" fill="#d9edf8" />
        <path d="M12 12V7a5 5 0 0 1 5 5z" fill="#f09a3c" />
        <path d="M20 9h5v3h-5zM27 9h5v3h-5zM20 15h5v3h-5zM27 15h5v3h-5z" fill="#9fd4f4" stroke="#e8f6fd" />
        <path d="M8 19.500h8" stroke="#e6d57d" strokeWidth="3" />
        <ellipse cx="20" cy="27" rx="6.500" ry="4" fill="#e2e5e9" stroke="#939ba5" />
        <path d="M20 20v4" stroke="#7d868f" strokeWidth="2" />
      </>
    ),
  },
  {
    name: 'Raccoon',
    look: 'from-[#7cb8e6] via-[#459cdc] to-[#3996e0]',
    icon: (
      <>
        <path d="M6 5c3 0 6 1 9 3h8c2-3 5-5 8-6-1 4 0 7 0 10 2 5 0 11-5 14l-7 4-6-4C7 23 6 17 8 12 7 10 6 8 6 5z" fill="#6f6860" stroke="#3a3733" strokeWidth=".8" />
        <path d="M7 6c3 1 5 2 6 4l-5 2zM30 4c-3 1-5 4-5 6l4 2z" fill="#22211f" />
        <path d="M9 15c5-4 8-2 10 1 2-4 6-5 11-2l-3 4-6 5h-4l-7-4z" fill="#e2dbd0" />
        <path d="M10 18c3-4 7-3 7 1l-3 3zM28 17c-3-4-7-3-7 1l3 4z" fill="#1b1a19" />
        <path d="M19 9v12" stroke="#3b3835" strokeWidth="2" />
        <circle cx="14" cy="18" r="1" fill="#d9a05a" />
        <circle cx="24.500" cy="17.500" r="1" fill="#d9a05a" />
        <path d="M13 23h12l-6 5z" fill="#efe9df" />
        <ellipse cx="19" cy="23" rx="2.200" ry="1.600" fill="#111" />
      </>
    ),
  },
];

const Taskbar = () => (
  <footer className="flex h-10 shrink-0 border-t border-[#164a78] bg-[linear-gradient(90deg,#1b6cab_0,#2f8fd6_240px,#31a4e8_560px,#32a3e7_800px,#2b7cb4_890px,#2b78ae_100%)]">
    <button aria-label="Start" className="flex w-[54px] items-center justify-center bg-[#333333]">
      <svg width="30" height="28" viewBox="0 0 30 28">
        <path d="M5 3c4-2 7-1 10 1l-3 9c-3-2-6-2-10-1z" fill="#e2322c" />
        <path d="M17 5c4 2 7 2 11 0l-3 9c-4 2-7 2-11 0z" fill="#82bc34" />
        <path d="M2 14c4-1 7-1 10 1l-3 9c-3-2-6-2-9 0z" fill="#2fa8e5" />
        <path d="M13 16c4 2 7 2 11 0l-3 9c-4 2-7 2-11 0z" fill="#f6a83a" />
      </svg>
    </button>
    <div className="ml-[6px] flex gap-1 pb-px">
      {apps.map((app) => (
        <button
          key={app.name}
          aria-label={app.name}
          className={`flex w-[58px] items-center justify-center rounded-xs border border-[#a8d6f5] bg-gradient-to-br ${app.look}`}
        >
          <svg width="38" height="34" viewBox="0 0 38 34">{app.icon}</svg>
        </button>
      ))}
    </div>
    <div className="ml-auto flex items-center gap-2 text-white">
      <button aria-label="Action center">
        <svg width="16" height="16" viewBox="0 0 16 16"><path d="M1.500 1v15" stroke="#fff" strokeWidth="1.500" /><path d="M2 2h6l1 2h6l-2 5H8L7.500 8H2z" fill="#fff" /></svg>
      </button>
      <button aria-label="Network status">
        <svg width="16" height="16" viewBox="0 0 16 16">
          <path d="M5 3h10v8H5" fill="none" stroke="#fff" strokeWidth="1.500" />
          <path d="M10 11v3M6.500 14.500h7M.5.5v3h4v-3M2.500 3.500V14H6" fill="none" stroke="#fff" strokeWidth="1.300" />
        </svg>
      </button>
      <button aria-label="Volume">
        <svg width="16" height="16" viewBox="0 0 16 16">
          <path d="M.5 5.500H3l4-4v13l-4-4H.5z" fill="#fff" />
          <path d="M9 5.500c1 1.500 1 3.500 0 5M11 4c2 2.500 2 5.500 0 8M13 2.500c3 3.500 3 7.500 0 11" fill="none" stroke="#fff" strokeWidth="1.100" />
        </svg>
      </button>
      <div className="mr-1 w-[66px] text-center text-[12px] leading-[17px] whitespace-nowrap">
        <div>11:26 AM</div>
        <div>4/9/2022</div>
      </div>
    </div>
    <button aria-label="Show desktop" className="w-[14px] border-l border-[#8fbbdb] bg-gradient-to-b from-[#6fa1c5] to-[#2e6b98]" />
  </footer>
);

const App: React.FC = () => {
  return (
    <div className="relative flex h-screen flex-col overflow-hidden bg-[#f0f0f0] font-['Open_Sans','Noto_Sans',sans-serif] text-black">
      <BrowserChrome />
      <div className="flex h-[26px] shrink-0 items-center gap-1 bg-gradient-to-b from-[#fafafa] to-[#efefef] pt-px pl-1 text-[12px]">
        <svg width="16" height="16" viewBox="0 0 16 16">
          <path d="M1 1h10l3 3v11H1z" fill="#9bcbe8" stroke="#4a8bb5" />
          <circle cx="8" cy="6.500" r="2.800" fill="#e2f3fc" stroke="#2f6f9c" strokeWidth="1.300" />
          <path d="M6 9 3.500 11.500" stroke="#2f6f9c" strokeWidth="1.800" />
        </svg>
        <a href="#most-visited">Most Visited</a>
      </div>
      <div className="flex h-[23px] shrink-0 items-center justify-between border-t border-[#a5a5a5] bg-[#f0f0f0] pr-[6px] text-[12px]">
        <button className="flex h-full items-center gap-[3px] bg-white pt-px pr-6 pl-1"><WarningIcon />Untrusted Connection</button>
        <button aria-label="List all tabs">
          <svg width="8" height="8" viewBox="0 0 8 8"><path d="M0 0h3v3H0zM5 0h3v3H5zM0 5h3v3H0zM5 5h3v3H5z" fill="#222" /></svg>
        </button>
      </div>
      <div className="flex min-h-0 flex-1 justify-end bg-[#873033]">
        <ScrollBar />
      </div>
      <div className="h-5 shrink-0 bg-[#f0f0f0] pl-[3px] text-[12px] leading-[21px]">Done</div>
      <Taskbar />
      <ExplorerWindow />
    </div>
  );
};

export default App;
